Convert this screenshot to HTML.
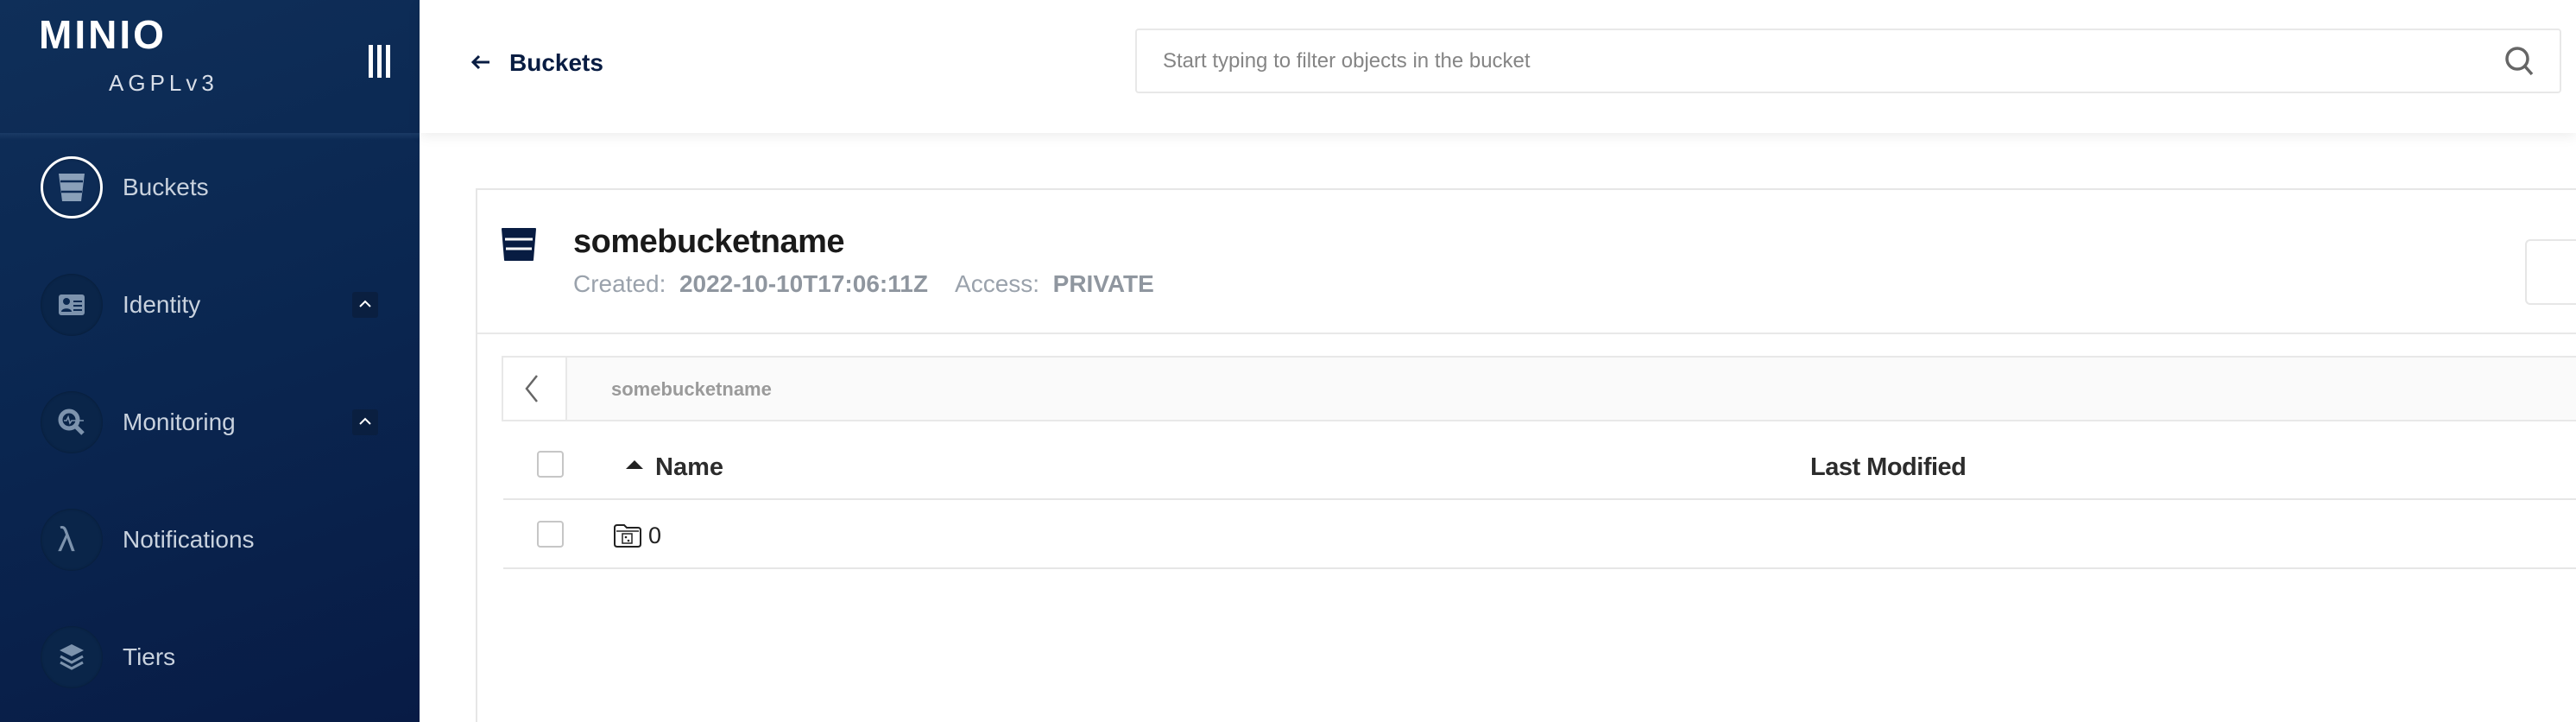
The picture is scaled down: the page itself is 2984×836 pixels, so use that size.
<!DOCTYPE html>
<html style="overflow:hidden;height:836px"><head><meta charset="utf-8"><style>
*{margin:0;padding:0;box-sizing:border-box}
body{width:2984px;height:836px;overflow:hidden;background:#fff;font-family:"Liberation Sans",sans-serif;position:relative}
.a{position:absolute;white-space:nowrap}
#sb{position:absolute;left:0;top:0;width:486px;height:836px;background:linear-gradient(160deg,#0f2f59 0%,#0a2650 50%,#081b45 100%)}
.circ{position:absolute;left:47px;width:72px;height:72px;border-radius:50%;background:#0a2549;box-shadow:0 0 3px rgba(0,0,0,.3) inset}
.lbl{position:absolute;left:142px;height:40px;line-height:40px;font-size:28px;color:#c9d2de}
.chev{position:absolute;left:408px;width:30px;height:30px;background:#0a1f40;border-radius:3px}
.cb{position:absolute;left:622px;width:31px;height:31px;border:2px solid #c6c6c6;border-radius:4px;background:#fff}
</style></head><body>
<div id="sb">
  <div class="a" style="left:45px;top:15px;font-size:46px;font-weight:bold;color:#fff;letter-spacing:3px;line-height:50px">MINIO</div>
  <div class="a" style="left:126px;top:80px;font-size:26px;color:#d8dee8;letter-spacing:5px;line-height:32px">AGPLv3</div>
  <div class="a" style="left:427px;top:52px;width:5px;height:38px;background:#fff"></div>
  <div class="a" style="left:437px;top:52px;width:5px;height:38px;background:#fff"></div>
  <div class="a" style="left:447px;top:52px;width:5px;height:38px;background:#fff"></div>
  <div class="a" style="left:0;top:154px;width:486px;height:8px;background:linear-gradient(#1a3a65,rgba(15,47,89,0))"></div>

  <div class="circ" style="top:181px;border:3px solid #fff;background:#0d2b55"></div>
  <svg class="a" style="left:67px;top:198px" width="32" height="38" viewBox="0 0 32 38"><path d="M1 3h30l-4 32H5z" fill="#8aa0b9"/><path d="M3 12h26M4 24h24" stroke="#0d2b55" stroke-width="2.5"/></svg>
  <div class="lbl" style="top:197px">Buckets</div>

  <div class="circ" style="top:317px"></div>
  <svg class="a" style="left:68px;top:341px" width="30" height="24" viewBox="0 0 30 24"><rect width="30" height="24" rx="3" fill="#7d93ad"/><circle cx="9" cy="8" r="4" fill="#0b2850"/><path d="M3 20c0-5 12-5 12 0z" fill="#0b2850"/><path d="M17 8h10M17 13h10M17 18h10" stroke="#0b2850" stroke-width="2"/></svg>
  <div class="lbl" style="top:333px">Identity</div>
  <div class="chev" style="top:338px"></div>
  <svg class="a" style="left:415px;top:346px" width="16" height="12" viewBox="0 0 16 12"><path d="M2 9l6-6 6 6" stroke="#fff" stroke-width="2" fill="none"/></svg>

  <div class="circ" style="top:453px"></div>
  <svg class="a" style="left:66px;top:472px" width="34" height="34" viewBox="0 0 34 34"><circle cx="14" cy="14" r="10" stroke="#7d93ad" stroke-width="5" fill="none"/><path d="M21 21l9 9" stroke="#7d93ad" stroke-width="5"/><path d="M8 15h3l2-4 2 7 2-3h14" stroke="#7d93ad" stroke-width="1.6" fill="none"/></svg>
  <div class="lbl" style="top:469px">Monitoring</div>
  <div class="chev" style="top:474px"></div>
  <svg class="a" style="left:415px;top:482px" width="16" height="12" viewBox="0 0 16 12"><path d="M2 9l6-6 6 6" stroke="#fff" stroke-width="2" fill="none"/></svg>

  <div class="circ" style="top:589px"></div>
  <div class="a" style="left:67px;top:603px;font-size:40px;line-height:44px;color:#7d93ad">λ</div>
  <div class="lbl" style="top:605px">Notifications</div>

  <div class="circ" style="top:725px"></div>
  <svg class="a" style="left:67px;top:744px" width="32" height="34" viewBox="0 0 32 34"><path d="M16 2l14 7-14 7-14-7z" fill="#7d93ad"/><path d="M3 16l13 7 13-7M3 23l13 7 13-7" stroke="#7d93ad" stroke-width="3" fill="none"/></svg>
  <div class="lbl" style="top:741px">Tiers</div>
</div>

<!-- header -->
<div class="a" style="left:486px;top:0;width:2498px;height:154px;background:#fff;box-shadow:0 4px 14px rgba(0,0,0,.07)"></div>
<svg class="a" style="left:545px;top:62px" width="24" height="20" viewBox="0 0 24 20"><path d="M22 10H4M10 3l-7 7 7 7" stroke="#081c42" stroke-width="3" fill="none"/></svg>
<div class="a" style="left:590px;top:56px;font-size:28px;line-height:34px;font-weight:bold;color:#081c42">Buckets</div>
<div class="a" style="left:1315px;top:33px;width:1652px;height:75px;border:2px solid #e8e8e8;border-radius:4px;background:#fff"></div>
<div class="a" style="left:1347px;top:57px;font-size:24px;line-height:28px;color:#858585">Start typing to filter objects in the bucket</div>
<svg class="a" style="left:2900px;top:52px" width="36" height="38" viewBox="0 0 36 38"><circle cx="16" cy="16" r="12" stroke="#666" stroke-width="3.5" fill="none"/><path d="M25 25l8 9" stroke="#666" stroke-width="3.5"/></svg>

<!-- card -->
<div class="a" style="left:551px;top:218px;width:2433px;height:618px;border:2px solid #e6e6e6;border-right:none;border-bottom:none;background:#fff"></div>
<svg class="a" style="left:581px;top:263px" width="40" height="40" viewBox="0 0 40 40"><path d="M1 2h38l-3 36H4z" fill="#081c42" stroke="#081c42" stroke-linejoin="round" stroke-width="2"/><path d="M4 14h32M5 25h30" stroke="#fff" stroke-width="3"/></svg>
<div class="a" style="left:664px;top:258px;font-size:38px;line-height:44px;font-weight:bold;color:#1a1a1a;letter-spacing:-0.5px">somebucketname</div>
<div class="a" style="left:664px;top:312px;font-size:28px;line-height:34px;color:#9aa2ac">Created:&nbsp;&nbsp;<b style="color:#8f969f">2022-10-10T17:06:11Z</b>&nbsp;&nbsp;&nbsp;&nbsp;Access:&nbsp;&nbsp;<b style="color:#8f969f">PRIVATE</b></div>
<div class="a" style="left:2925px;top:277px;width:100px;height:76px;border:2px solid #e6e6e6;border-radius:6px"></div>
<div class="a" style="left:553px;top:385px;width:2431px;height:2px;background:#e8e8e8"></div>

<!-- breadcrumb -->
<div class="a" style="left:581px;top:412px;width:2403px;height:76px;border:2px solid #e8e8e8;border-right:none;background:#fafafa"></div>
<div class="a" style="left:583px;top:414px;width:74px;height:72px;background:#fff;border-right:2px solid #e8e8e8"></div>
<svg class="a" style="left:606px;top:432px" width="20" height="36" viewBox="0 0 20 36"><path d="M16 3L4 18l12 15" stroke="#666" stroke-width="2.5" fill="none"/></svg>
<div class="a" style="left:708px;top:438px;font-size:22px;line-height:26px;font-weight:bold;color:#9a9a9a">somebucketname</div>

<!-- table -->
<div class="cb" style="top:522px"></div>
<svg class="a" style="left:724px;top:532px" width="22" height="12" viewBox="0 0 22 12"><path d="M1 11L11 1l10 10z" fill="#222"/></svg>
<div class="a" style="left:759px;top:523px;font-size:29px;line-height:36px;font-weight:bold;color:#2c2c2c">Name</div>
<div class="a" style="left:2097px;top:523px;font-size:29px;line-height:36px;font-weight:bold;color:#2c2c2c;letter-spacing:-0.5px">Last Modified</div>
<div class="a" style="left:583px;top:577px;width:2401px;height:2px;background:#e6e6e6"></div>
<div class="cb" style="top:603px"></div>
<svg class="a" style="left:710px;top:605px" width="34" height="30" viewBox="0 0 34 30"><path d="M2 6c0-2 1-3 3-3h8l3 3h13c2 0 3 1 3 3v16c0 2-1 3-3 3H5c-2 0-3-1-3-3z" fill="#fff" stroke="#222" stroke-width="2"/><path d="M4 10h26" stroke="#222" stroke-width="1.5"/><rect x="11" y="13" width="11" height="11" fill="none" stroke="#222" stroke-width="1.5"/><circle cx="15" cy="17" r="1.3" fill="#222"/><circle cx="18" cy="21" r="1.3" fill="#222"/></svg>
<div class="a" style="left:751px;top:603px;font-size:27px;line-height:34px;color:#222">0</div>
<div class="a" style="left:583px;top:657px;width:2401px;height:2px;background:#e6e6e6"></div>
</body></html>
